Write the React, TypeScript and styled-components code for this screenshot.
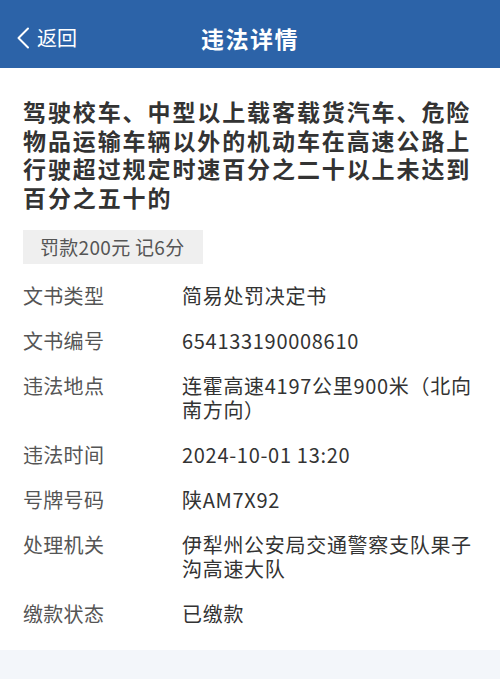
import React from "react";
import styled, { createGlobalStyle } from "styled-components";

const Global = createGlobalStyle`
  html, body { margin: 0; padding: 0; background: #f3f6fa; }
  body { font-family: "Noto Sans CJK SC", "Noto Sans", sans-serif; }
  * { box-sizing: border-box; }
`;

const Page = styled.div`
  width: 500px;
  min-height: 679px;
  background: #f3f6fa;
`;

const Header = styled.header`
  height: 68px;
  background: #2c63a8;
  display: grid;
  grid-template-columns: 1fr auto 1fr;
  align-items: center;
  padding: 7px 16px 0;
  color: #fff;
  box-shadow: 0 1px 0 #2a5590;
`;

const Back = styled.div`
  display: flex;
  align-items: center;
  gap: 7px;
  font-size: 20px;
  line-height: 1;
`;

const Title = styled.h1`
  margin: 0;
  font-size: 23px;
  font-weight: 700;
  letter-spacing: 1.5px;
`;

const Card = styled.main`
  background: #fff;
  padding: 29px 23px 24px;
`;

const Heading = styled.h2`
  margin: 0;
  font-size: 23px;
  font-weight: 700;
  line-height: 28.7px;
  letter-spacing: 1.9px;
  color: #333;
`;

const Badge = styled.div`
  display: inline-flex;
  align-items: center;
  height: 34px;
  margin-top: 18px;
  padding: 0 17px;
  background: #efefef;
  color: #555;
  font-size: 19px;
  letter-spacing: 0.3px;
  width: 180px;
`;

const List = styled.dl`
  margin: 20px 0 0;
  display: grid;
  grid-template-columns: 159px 1fr;
  row-gap: 21px;
  font-size: 20px;
  line-height: 24px;
`;

const Label = styled.dt`
  color: #555;
  letter-spacing: 0.3px;
`;

const Value = styled.dd`
  margin: 0;
  color: #333;
  letter-spacing: 0.7px;
`;

const rows: [string, string][] = [
  ["文书类型", "简易处罚决定书"],
  ["文书编号", "654133190008610"],
  ["违法地点", "连霍高速4197公里900米（北向南方向）"],
  ["违法时间", "2024-10-01 13:20"],
  ["号牌号码", "陕AM7X92"],
  ["处理机关", "伊犁州公安局交通警察支队果子沟高速大队"],
  ["缴款状态", "已缴款"],
];

export default function App() {
  return (
    <Page>
      <Global />
      <Header>
        <Back>
          <svg width="14" height="22" viewBox="0 0 14 22" fill="none">
            <path d="M12 1.5 L2.5 11 L12 20.5" stroke="#fff" strokeWidth="2" strokeLinecap="round" strokeLinejoin="round" />
          </svg>
          <span>返回</span>
        </Back>
        <Title>违法详情</Title>
        <div />
      </Header>
      <Card>
        <Heading>驾驶校车、中型以上载客载货汽车、危险物品运输车辆以外的机动车在高速公路上行驶超过规定时速百分之二十以上未达到百分之五十的</Heading>
        <Badge>罚款200元 记6分</Badge>
        <List>
          {rows.map(([k, v]) => (
            <React.Fragment key={k}>
              <Label>{k}</Label>
              <Value>{v}</Value>
            </React.Fragment>
          ))}
        </List>
      </Card>
    </Page>
  );
}
